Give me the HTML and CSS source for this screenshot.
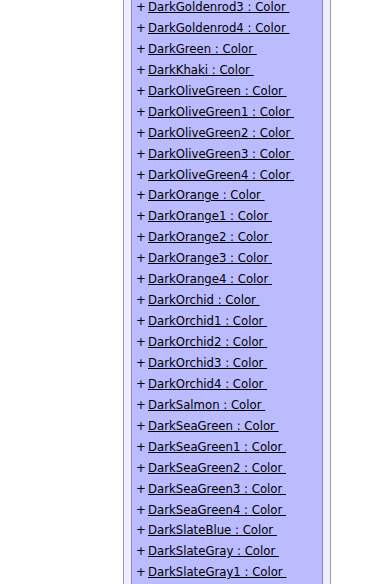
FILE: index.html
```html
<!DOCTYPE html>
<html lang="en">
<head>
  <meta charset="UTF-8"/>
  <title>Color constants</title>
  <link rel="stylesheet" href="styles.css">
</head>
<body>
  <div class="outer">
    <div class="inner">
      <ul class="members">
        <li><span class="vis">+</span><a href="#">DarkGoldenrod3 : Color </a></li>
        <li><span class="vis">+</span><a href="#">DarkGoldenrod4 : Color </a></li>
        <li><span class="vis">+</span><a href="#">DarkGreen : Color </a></li>
        <li><span class="vis">+</span><a href="#">DarkKhaki : Color </a></li>
        <li><span class="vis">+</span><a href="#">DarkOliveGreen : Color </a></li>
        <li><span class="vis">+</span><a href="#">DarkOliveGreen1 : Color </a></li>
        <li><span class="vis">+</span><a href="#">DarkOliveGreen2 : Color </a></li>
        <li><span class="vis">+</span><a href="#">DarkOliveGreen3 : Color </a></li>
        <li><span class="vis">+</span><a href="#">DarkOliveGreen4 : Color </a></li>
        <li><span class="vis">+</span><a href="#">DarkOrange : Color </a></li>
        <li><span class="vis">+</span><a href="#">DarkOrange1 : Color </a></li>
        <li><span class="vis">+</span><a href="#">DarkOrange2 : Color </a></li>
        <li><span class="vis">+</span><a href="#">DarkOrange3 : Color </a></li>
        <li><span class="vis">+</span><a href="#">DarkOrange4 : Color </a></li>
        <li><span class="vis">+</span><a href="#">DarkOrchid : Color </a></li>
        <li><span class="vis">+</span><a href="#">DarkOrchid1 : Color </a></li>
        <li><span class="vis">+</span><a href="#">DarkOrchid2 : Color </a></li>
        <li><span class="vis">+</span><a href="#">DarkOrchid3 : Color </a></li>
        <li><span class="vis">+</span><a href="#">DarkOrchid4 : Color </a></li>
        <li><span class="vis">+</span><a href="#">DarkSalmon : Color </a></li>
        <li><span class="vis">+</span><a href="#">DarkSeaGreen : Color </a></li>
        <li><span class="vis">+</span><a href="#">DarkSeaGreen1 : Color </a></li>
        <li><span class="vis">+</span><a href="#">DarkSeaGreen2 : Color </a></li>
        <li><span class="vis">+</span><a href="#">DarkSeaGreen3 : Color </a></li>
        <li><span class="vis">+</span><a href="#">DarkSeaGreen4 : Color </a></li>
        <li><span class="vis">+</span><a href="#">DarkSlateBlue : Color </a></li>
        <li><span class="vis">+</span><a href="#">DarkSlateGray : Color </a></li>
        <li><span class="vis">+</span><a href="#">DarkSlateGray1 : Color </a></li>
        <li><span class="vis">+</span><a href="#">DarkSlateGray2 : Color </a></li>
        <li><span class="vis">+</span><a href="#">DarkSlateGray3 : Color </a></li>
      </ul>
    </div>
  </div>
</body>
</html>
```

FILE: styles.css
```css
body { margin: 0; background: #fff; color: #000; font-family: "DejaVu Sans Condensed", "DejaVu Sans", sans-serif; overflow: hidden; }
.outer {
  margin: -4px 0 0 123px; width: 192px;
  border: 1px solid #9a9aa8; background: #eeeeff;
  padding: 0 7px;
}
.inner { border: 1px solid #8a8ac0; border-top: 0; background: #bbbbff; }
.members { list-style: none; margin: 0; padding: 0 0 0 4px; }
.members li { font-size: 13px; line-height: 20.93px; white-space: nowrap; }
.members .vis { display: inline-block; width: 12px; }
.members a { color: #000; text-decoration: underline; white-space: pre; }
```
